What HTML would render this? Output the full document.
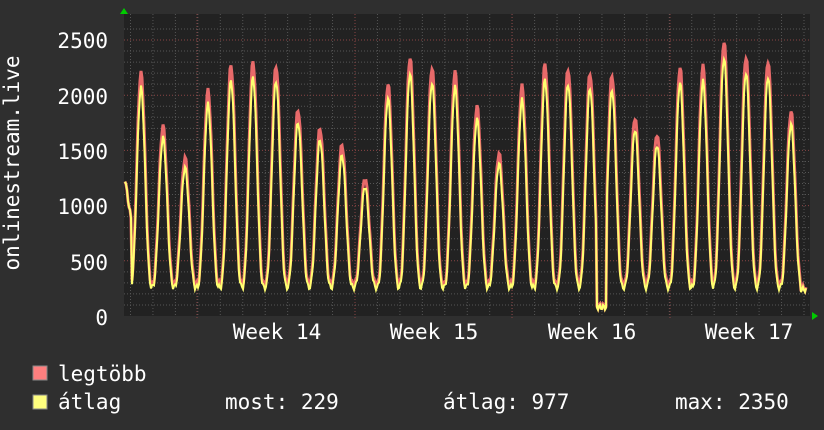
<!DOCTYPE html><html><head><meta charset="utf-8"><style>
body{margin:0;background:#2f2f2f;width:824px;height:430px;overflow:hidden;font-family:"DejaVu Sans Mono","Liberation Mono",monospace;color:#fff}
svg{position:absolute;left:0;top:0}
text{font-family:"DejaVu Sans Mono","Liberation Mono",monospace;fill:#fff;font-size:21px}
</style></head><body>
<svg id="s" width="824" height="430" xmlns="http://www.w3.org/2000/svg">
<rect x="124" y="14" width="686" height="302" fill="#222"/>
<g id="grid"></g>
<g id="data"></g>
<polygon points="124,8 120,14 128,14" fill="#0c0"/>
<polygon points="818,316 812,312 812,320" fill="#0c0"/>
<g text-anchor="end">
<text x="108" y="48">2500</text><text x="108" y="104">2000</text><text x="108" y="159">1500</text><text x="108" y="214">1000</text><text x="108" y="270">500</text><text x="108" y="325">0</text>
</g>
<text transform="translate(19,163) rotate(-90)" text-anchor="middle">onlinestream.live</text>
<g text-anchor="middle">
<text x="277" y="339">Week 14</text><text x="434" y="339">Week 15</text><text x="592" y="339">Week 16</text><text x="749" y="339">Week 17</text>
</g>
<rect x="33" y="366" width="14" height="14" fill="#ff7f7f" stroke="#888" stroke-width="1"/>
<rect x="33" y="395" width="14" height="14" fill="#ffff7f" stroke="#888" stroke-width="1"/>
<text x="58" y="381">legtöbb</text>
<text x="58" y="409">átlag</text>
<text x="225" y="409">most: 229</text>
<text x="443" y="409">átlag: 977</text>
<text x="675" y="409">max: 2350</text>
</svg>
<script>
var ns="http://www.w3.org/2000/svg",g=document.getElementById('grid'),d=document.getElementById('data');
function ln(x1,y1,x2,y2,c){var l=document.createElementNS(ns,'line');l.setAttribute('x1',x1);l.setAttribute('y1',y1);l.setAttribute('x2',x2);l.setAttribute('y2',y2);l.setAttribute('stroke',c);l.setAttribute('stroke-dasharray','1,2');g.appendChild(l);}
function Y(v){return 316-v*0.1104;}
for(var v=100;v<=2600;v+=100){var y=Y(v);if(y<14)break;ln(124,y,810,y,v%500?'#555':'#8a4444');}
for(var x=130.5;x<810;x+=22.45){ln(x,14,x,316,'#555');}
[197,355,512,670].forEach(function(x){ln(x,14,x,320,'#8a4444');});
var pk=[[141,2200],[163,1720],[185,1430],[208,2040],[231,2270],[253,2300],[276,2270],[298,1870],[320,1700],[342,1550],[365,1250],[388,2100],[410,2340],[432,2250],[455,2210],[477,1900],[499,1470],[522,2080],[545,2280],[568,2240],[590,2200],[612,2180],[635,1800],[657,1650],[680,2250],[703,2260],[724,2490],[746,2350],[768,2310],[791,1850]];
function val(x,avg){var best=0;for(var i=0;i<pk.length;i++){var dx=(x-pk[i][0])/22.45;if(Math.abs(dx)<0.5){var c=Math.pow(Math.cos(dx*Math.PI),3);var p=pk[i][1]*(avg?0.94:1);var b=avg?260:290;best=b+(p-b)*c;}}
if(x<132)best=1300-(x-124)*60;
if(x>=597&&x<=606)best=avg?80:90; if(x>606&&x<=618&&best<400)best=avg?60:150;
if(x>800)best=avg?240:250;
return best;}
function poly(avg,c,w){var pts=[];for(var x=125;x<=806;x+=1){var v=val(x,avg)+(Math.sin(x*1.7)*25);pts.push(x+','+Y(Math.max(0,v)).toFixed(1));}
var p=document.createElementNS(ns,'polyline');p.setAttribute('points',pts.join(' '));p.setAttribute('fill','none');p.setAttribute('stroke',c);p.setAttribute('stroke-width',w);d.appendChild(p);}
poly(false,'#e86a6a',3);poly(true,'#ffff70',2);
</script>
</body></html>
